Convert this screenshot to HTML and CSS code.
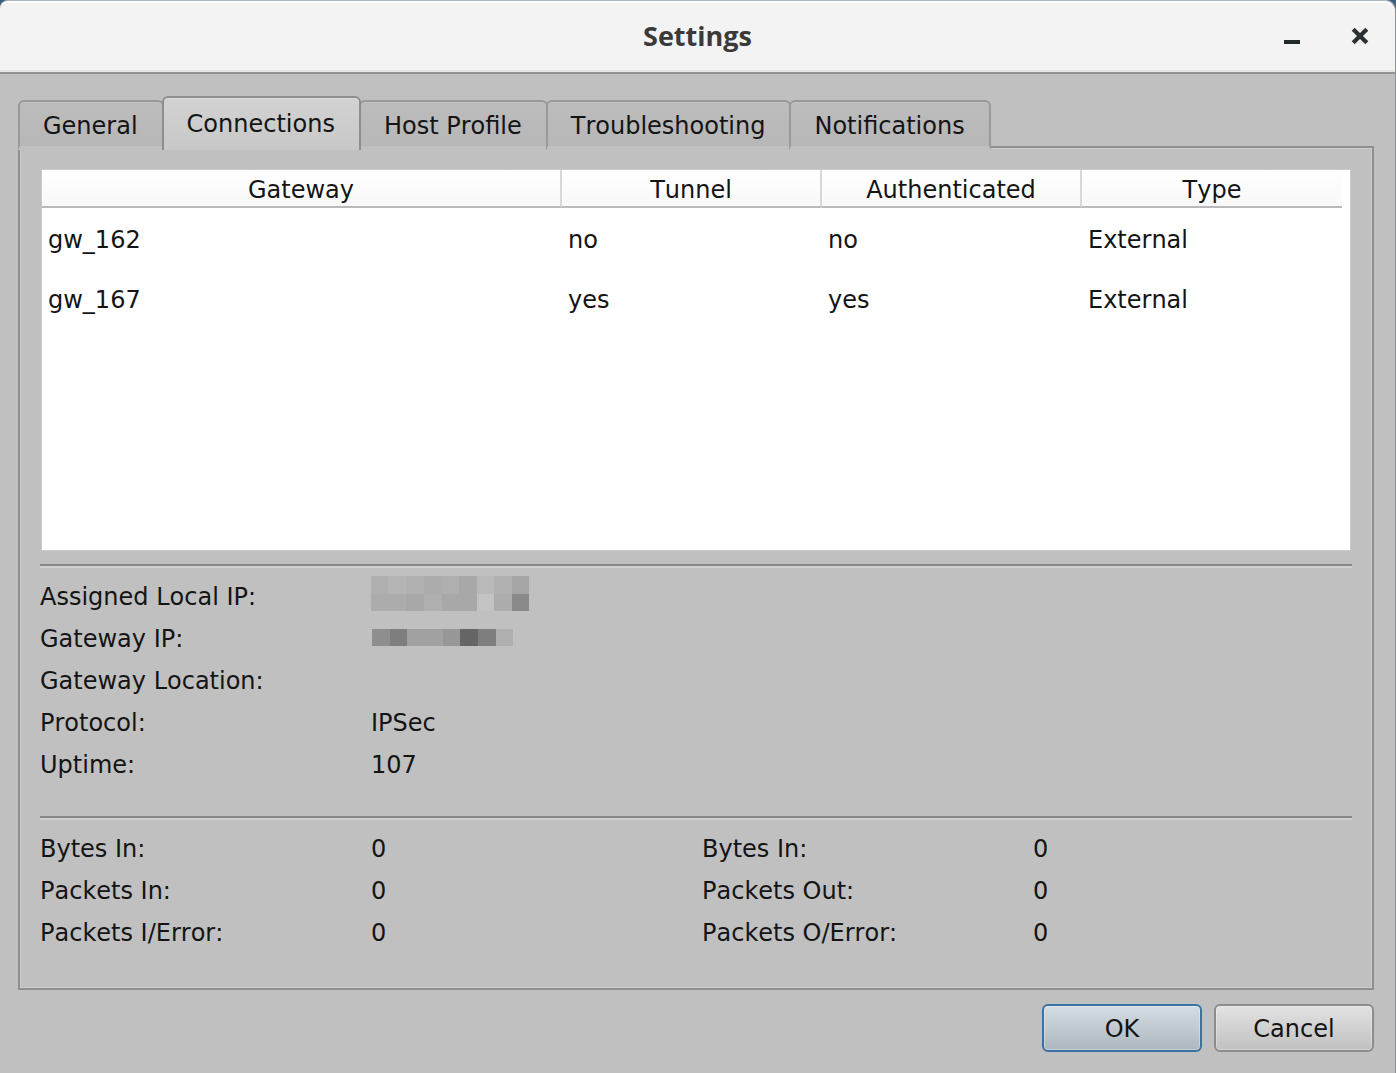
FILE: index.html
```html
<!DOCTYPE html>
<html lang="en">
<head>
<meta charset="utf-8">
<title>Settings</title>
<link rel="stylesheet" href="styles.css">
</head>
<body>
<div class="window">
  <header class="titlebar">
    <h1 class="title">Settings</h1>
    <div class="window-controls">
      <button class="window-button" type="button" aria-label="Minimize">
        <svg width="20" height="20" viewBox="0 0 20 20" aria-hidden="true"><path d="M2 14h16v4H2z" fill="#23282a"/></svg>
      </button>
      <button class="window-button" type="button" aria-label="Close">
        <svg width="20" height="20" viewBox="0 0 20 20" aria-hidden="true"><path d="M3.2 3.2L16.800 16.800M16.800 3.200L3.200 16.800" stroke="#2b3032" stroke-width="4.200"/></svg>
      </button>
    </div>
  </header>

  <main class="content">
    <div class="tabs" role="tablist">
      <button class="tab" type="button" role="tab" aria-selected="false">General</button>
      <button class="tab tab-active" type="button" role="tab" aria-selected="true" aria-controls="connections">Connections</button>
      <button class="tab" type="button" role="tab" aria-selected="false">Host Profile</button>
      <button class="tab" type="button" role="tab" aria-selected="false">Troubleshooting</button>
      <button class="tab" type="button" role="tab" aria-selected="false">Notifications</button>
    </div>

    <section class="panel" id="connections" role="tabpanel">
      <div class="table-box">
        <table class="gateways">
          <colgroup><col><col class="col-fixed"><col class="col-fixed"><col class="col-fixed"></colgroup>
          <thead>
            <tr><th scope="col">Gateway</th><th scope="col">Tunnel</th><th scope="col">Authenticated</th><th scope="col">Type</th></tr>
          </thead>
          <tbody>
            <tr><td>gw_162</td><td>no</td><td>no</td><td>External</td></tr>
            <tr><td>gw_167</td><td>yes</td><td>yes</td><td>External</td></tr>
          </tbody>
        </table>
      </div>

      <hr class="divider">

      <dl class="details details-connection">
        <dt>Assigned Local IP:</dt>
        <dd>
          <svg class="redacted" width="160" height="42" viewBox="0 0 160 42" role="img" aria-label="Hidden address" shape-rendering="crispEdges">
            <path fill="#afafaf" d="M0 0h17v18H0zM71 0h17v18H71zM53 18h18v17H53z"/>
            <path fill="#b5b5b5" d="M17 0h18v18H17z"/>
            <path fill="#b1b1b1" d="M35 0h18v18H35zM123 0h18v18h-18z"/>
            <path fill="#acacac" d="M53 0h18v18H53zM0 18h35v17H0zM123 18h18v17h-18z"/>
            <path fill="#a8a8a8" d="M88 0h18v18H88zM35 18h18v17H35zM71 18h35v17H71z"/>
            <path fill="#b9b9b9" d="M106 0h17v18h-17z"/>
            <path fill="#a5a5a5" d="M141 0h17v18h-17z"/>
            <path fill="#c3c3c3" d="M106 18h17v17h-17z"/>
            <path fill="#8a8a8a" d="M141 18h17v17h-17z"/>
          </svg>
        </dd>
        <dt>Gateway IP:</dt>
        <dd>
          <svg class="redacted" width="144" height="20" viewBox="0 0 144 20" role="img" aria-label="Hidden address" shape-rendering="crispEdges">
            <path fill="#8e8e8e" d="M1 0h18v17H1z"/>
            <path fill="#7e7e7e" d="M19 0h17v17H19zM107 0h18v17h-18z"/>
            <path fill="#a1a1a1" d="M36 0h36v17H36z"/>
            <path fill="#979797" d="M72 0h17v17H72z"/>
            <path fill="#656565" d="M89 0h18v17H89z"/>
            <path fill="#afafaf" d="M125 0h17v17h-17z"/>
          </svg>
        </dd>
        <dt>Gateway Location:</dt>
        <dd></dd>
        <dt>Protocol:</dt>
        <dd>IPSec</dd>
        <dt>Uptime:</dt>
        <dd>107</dd>
      </dl>

      <hr class="divider">

      <dl class="details">
        <dt>Bytes In:</dt><dd>0</dd>
        <dt>Bytes In:</dt><dd>0</dd>
        <dt>Packets In:</dt><dd>0</dd>
        <dt>Packets Out:</dt><dd>0</dd>
        <dt>Packets I/Error:</dt><dd>0</dd>
        <dt>Packets O/Error:</dt><dd>0</dd>
      </dl>
    </section>

    <footer class="actions">
      <button class="button button-default" type="button">OK</button>
      <button class="button" type="button">Cancel</button>
    </footer>
  </main>
</div>
</body>
</html>
```
FILE: styles.css
```css
* {
  box-sizing: border-box;
}

body {
  margin: 0;
  background: #3d5f7c;
  color: #141414;
  font: 24px/28px "DejaVu Sans", sans-serif;
  font-kerning: none;
}

button {
  margin: 0;
  color: inherit;
  font: inherit;
  font-kerning: inherit;
}

.window {
  display: flex;
  flex-direction: column;
  min-height: 100vh;
  border-top: 1px solid #a9b7c2;
  border-right: 1px solid #8b9298;
  border-radius: 8px 10px 0 0;
  background: #c0c0c0;
}

/* Title bar */
.titlebar {
  display: grid;
  grid-template-columns: 1fr auto 1fr;
  align-items: center;
  height: 73px;
  padding-bottom: 4px;
  border-top: 2px solid #fff;
  border-bottom: 2px solid #929292;
  border-radius: 8px 10px 0 0;
  background: #f3f3f3;
  box-shadow: inset 0 -2px #e4e4e2;
}

.title {
  grid-column: 2;
  margin: 0;
  color: #3a3a3a;
  font: 700 27px/36px "Open Sans", sans-serif;
}

.window-controls {
  display: flex;
  justify-content: flex-end;
  gap: 32px;
  padding-right: 17px;
}

.window-button {
  display: flex;
  justify-content: center;
  width: 36px;
  padding: 8px 0;
  border: 0;
  background: none;
}

/* Tabs */
.content {
  display: flex;
  flex: 1;
  flex-direction: column;
  padding: 22px 21px 21px 18px;
}

.tabs {
  z-index: 1;
  display: flex;
  align-items: flex-start;
  align-self: flex-start;
  margin-bottom: -4px;
}

.tab {
  height: 50px;
  margin: 4px 0 0 -2px;
  padding: 4px 24px 0 23px;
  border: 2px solid #999;
  border-bottom: 4px solid #c0c0c0;
  border-radius: 6px 6px 0 0;
  background: linear-gradient(#bcbcbc, #b7b7b7) padding-box;
  box-shadow: inset 0 1px #c2c2c2;
}

.tab:first-child {
  margin-left: 0;
}

.tab-active {
  z-index: 1;
  height: 54px;
  margin-top: 0;
  padding-top: 0;
  border-color: #8e8e8e;
  border-bottom: 0;
  background: linear-gradient(#d2d2d2, #c8c8c8);
  box-shadow: inset 0 1px #dadada;
}

/* Panel */
.panel {
  display: flex;
  flex: 1;
  flex-direction: column;
  padding: 20px;
  border: 2px solid #8f8f8f;
  box-shadow: inset 0 0 0 1px #cccccc;
}

.table-box {
  height: 382px;
  margin: 1px;
  padding-right: 8px;
  border: 1px solid #cacaca;
  background: #fff;
}

.gateways {
  width: 100%;
  border-collapse: separate;
  border-spacing: 0;
  table-layout: fixed;
}

.col-fixed {
  width: 260px;
}

.gateways th {
  height: 38px;
  padding: 4px 0 0;
  border-right: 2px solid #d8d8d8;
  border-bottom: 2px solid #b9b9b9;
  background: linear-gradient(#fff, #f8f8f8);
  font-weight: normal;
}

.gateways th:last-child {
  border-right: 0;
}

.gateways td {
  height: 60px;
  padding: 4px 6px 0;
}

.divider {
  width: 100%;
  height: 4px;
  margin: 12px 0 8px;
  border: 0;
  border-top: 2px solid #898989;
  border-bottom: 2px solid #d0d0d0;
}

/* Label and value pairs */
.details {
  display: grid;
  grid-template-columns: repeat(4, 1fr);
  grid-auto-rows: 42px;
  align-items: center;
  column-gap: 12px;
  margin: 0;
}

.details-connection {
  padding-bottom: 18px;
}

.details-connection dt {
  grid-column: 1;
}

.details dd {
  margin: 0;
}

.redacted {
  display: block;
}

/* Dialog buttons */
.actions {
  display: flex;
  justify-content: flex-end;
  gap: 12px;
  margin-top: 14px;
}

.button {
  width: 160px;
  height: 48px;
  padding: 2px 0 0;
  border: 2px solid #8c8c8c;
  border-radius: 6px;
  background: linear-gradient(#e2e2e2, #c1c1c1);
  box-shadow: inset 0 0 0 1px rgba(255, 255, 255, 0.3);
}

.button-default {
  border-color: #3a73a3;
  background: linear-gradient(#d5dde3, #adb7bf);
}
```
